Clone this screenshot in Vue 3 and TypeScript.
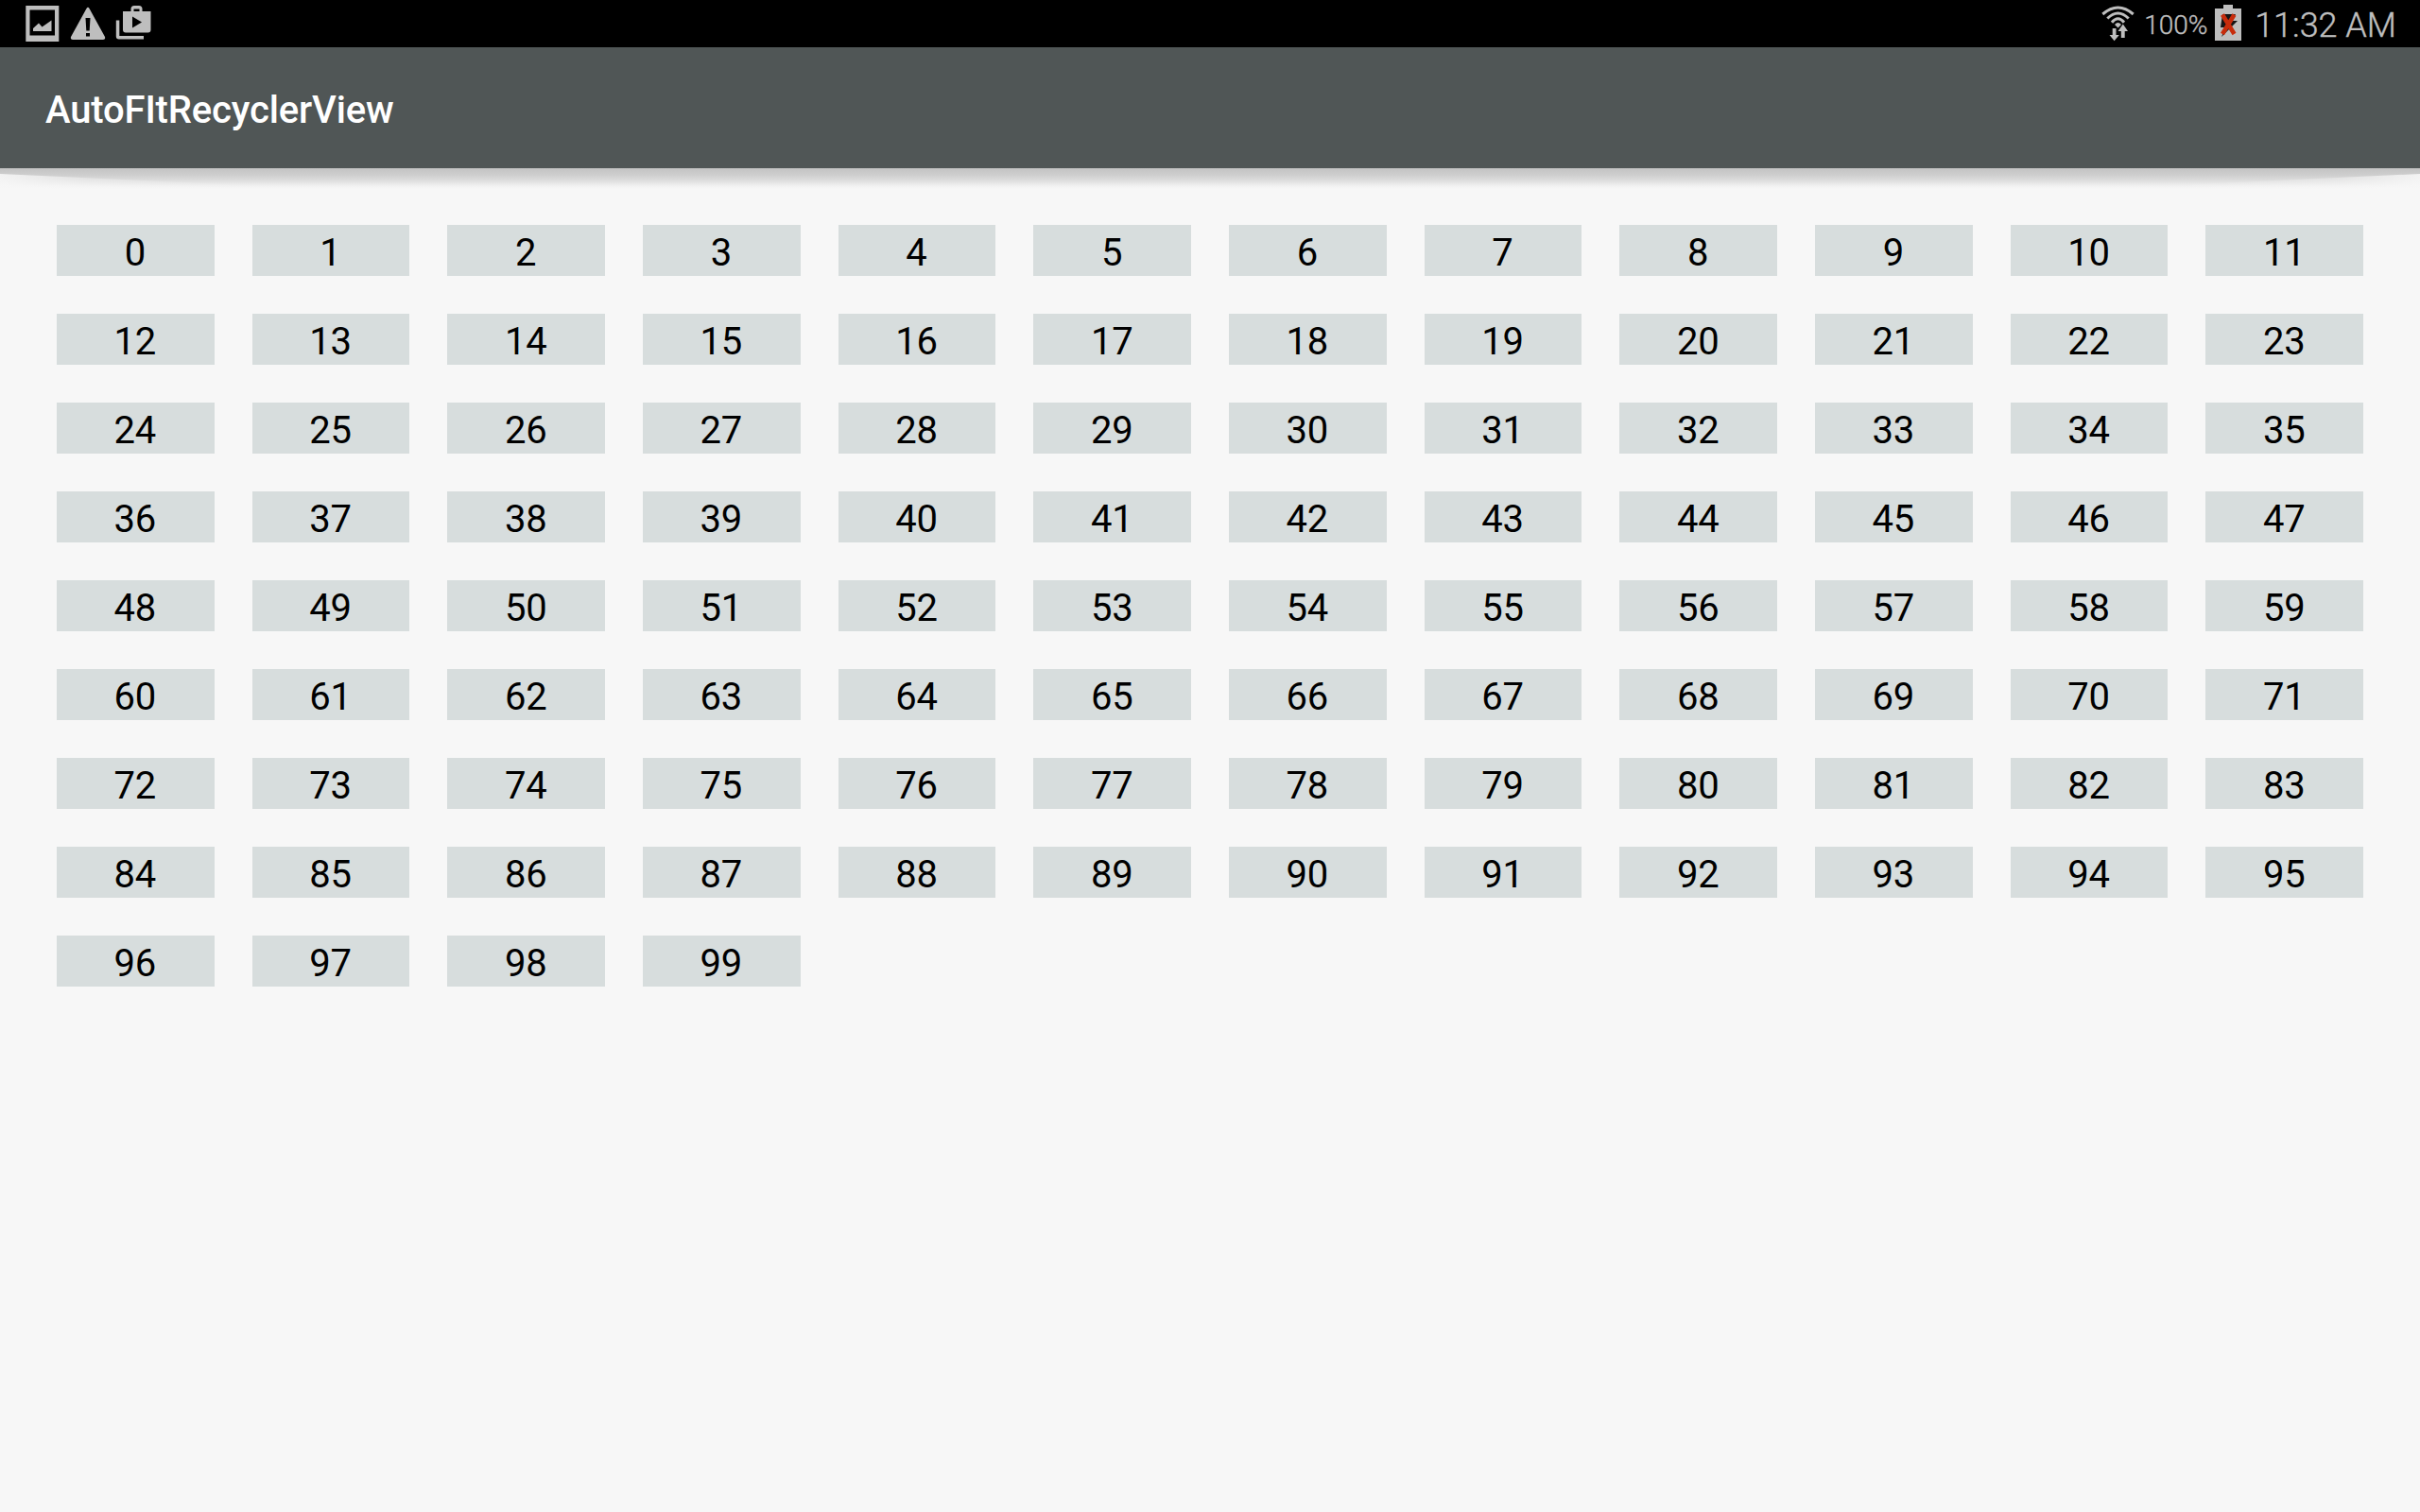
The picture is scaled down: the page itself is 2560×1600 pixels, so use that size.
<script setup lang="ts">
const items: number[] = Array.from({ length: 100 }, (_, i) => i)
</script>

<template>
  <div class="screen">
    <header class="status">
      <div class="notifications">
        <svg class="ic-image" width="36" height="40" viewBox="0 0 36 40">
          <path fill="#bebebe" fill-rule="evenodd" d="M0.3 1h35v38h-35zM4.500 5.500v27h26.500V5.500z" />
          <path fill="#bebebe" d="M8 28v-3l6-5.500 3.500 4L27.500 16.500V28z" />
        </svg>
        <svg class="ic-warning" width="38" height="36" viewBox="0 0 38 36">
          <path fill="#bebebe" fill-rule="evenodd" d="M17.5 2Q19 -.5 20.5 2L37 32Q37.800 35 35 35H3Q.2 35 1 32zM16.500 12l.8 13.500h3.400l.8-13.500zM17 28v3.500h4V28z" />
        </svg>
        <svg class="ic-store" width="38" height="38" viewBox="0 0 38 38">
          <path fill="#bebebe" fill-rule="evenodd" d="M8 7h8.500V4.500Q16.500 1 20 1h5Q28.500 1 28.500 4.500V7h9v19.500q0 3-3 3H11q-3 0-3-3zM19.500 7h6V4.500h-6zM18 12.500v12l10-6z" />
          <path fill="#bebebe" d="M.8 16.500h3.500V33H30v3.500H3.800q-3 0-3-3z" />
        </svg>
      </div>
      <div class="system">
        <svg class="ic-wifi" width="36" height="40" viewBox="0 0 36 40">
          <g fill="none" stroke="#bebebe" stroke-width="3">
            <path d="M1.300 11Q17.500-3 33.700 11" />
            <path d="M6.300 15.500Q17.500 4.500 28.700 15.500" />
            <path d="M11 19.700Q17.500 11.700 24 19.700" />
          </g>
          <path fill="#bebebe" d="M14 22q3.500-4 7 0l-3.500 3.500z" />
          <path fill="#bebebe" d="M11.700 26h3.800v7h3.300L13.600 39.200 8.500 33h3.200zM20.800 36v-7h-3.200l5.200-7.500 5.200 7.500h-3.300v7z" />
        </svg>
        <span class="percent">100%</span>
        <svg class="ic-battery" width="28" height="38" viewBox="0 0 28 38">
          <path fill="#bebebe" d="M0 4h9V0h10v4h9v34H0z" />
          <path fill="#151515" d="M8 10h14l-5 7h7l-8 8-9 9 4-10H6z" />
          <path stroke="#c72c0c" stroke-width="4.600" d="M8 10.500l12.500 20.500M20.500 10.500L8 31" />
        </svg>
        <span class="clock">11:32 AM</span>
      </div>
    </header>
    <div class="toolbar"><h1>AutoFItRecyclerView</h1></div>
    <main class="content">
      <div class="shadow"></div>
      <div class="grid">
        <div v-for="n in items" :key="n" class="cell">{{ n }}</div>
      </div>
    </main>
  </div>
</template>

<style>
html,
body {
  margin: 0;
  overflow: hidden;
}
</style>

<style scoped>
.screen {
  width: 2560px;
  height: 1600px;
  display: flex;
  flex-direction: column;
  background: #f7f7f7;
  font-family: Roboto, sans-serif;
}
.status {
  height: 50px;
  flex: none;
  display: flex;
  justify-content: space-between;
  background: #000;
  color: #bebebe;
}
.notifications {
  display: flex;
  align-items: flex-start;
  padding-left: 27px;
}
.ic-image { margin-top: 5px; }
.ic-warning { margin: 7px 0 0 11px; }
.ic-store { margin: 5px 0 0 10px; }
.system {
  display: flex;
  align-items: flex-start;
  padding-right: 25px;
  font-weight: 300;
  -webkit-text-stroke: 0.4px #bebebe;
  white-space: nowrap;
}
.ic-wifi { margin: 4px 9px 0 0; }
.percent {
  font-size: 28px;
  line-height: 54px;
  width: 75px;
}
.ic-battery { margin-top: 5px; }
.clock {
  font-size: 36px;
  line-height: 54px;
  margin-left: 14px;
}
.toolbar {
  height: 128px;
  flex: none;
  display: flex;
  align-items: center;
  padding-left: 48px;
  background: #505656;
}
h1 {
  margin: 0;
  color: #fff;
  font-size: 40px;
  font-weight: 500;
  line-height: 48px;
  padding-top: 6px;
  letter-spacing: -0.15px;
}
.content {
  position: relative;
  flex: 1;
}
.shadow {
  position: absolute;
  inset: 0 0 auto;
  height: 22px;
  background: linear-gradient(#c3c3c3, #cfcfcf 35%, #dedede 60%, #f1f1f1 85%, #f7f7f7);
}
/* the shadow thins out towards both screen edges */
.shadow::before,
.shadow::after {
  content: '';
  position: absolute;
  top: 6px;
  bottom: 0;
  left: 0;
  width: 260px;
  background: linear-gradient(90deg, rgba(247, 247, 247, 0.9), rgba(247, 247, 247, 0.4) 35%, rgba(247, 247, 247, 0));
  clip-path: polygon(0 0, 100% 75%, 100% 100%, 0 100%);
}
.shadow::after {
  left: auto;
  right: 0;
  transform: scaleX(-1);
}
.grid {
  display: grid;
  grid-template-columns: repeat(12, 1fr);
  padding: 40px;
}
.cell {
  box-sizing: border-box;
  margin: 20px;
  padding-right: 1px;
  height: 54px;
  line-height: 60px;
  text-align: center;
  background: #d7dddd;
  color: #000;
  font-size: 40px;
  letter-spacing: -0.2px;
}
</style>
